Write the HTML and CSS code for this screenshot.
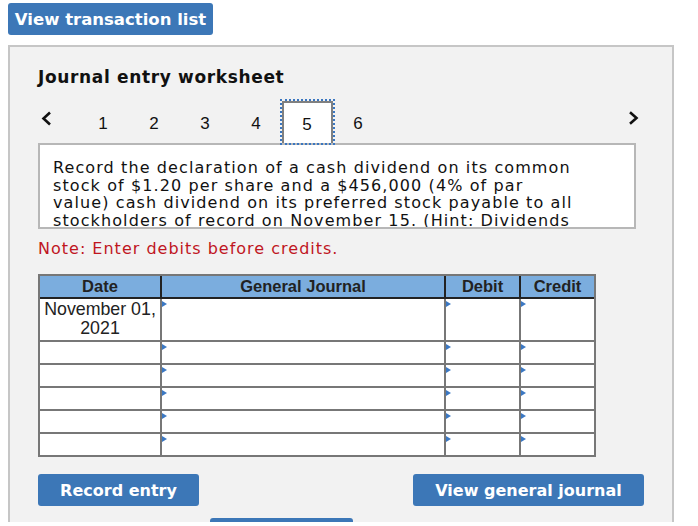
FILE: index.html
```html
<!DOCTYPE html>
<html lang="en">
<head>
<meta charset="utf-8">
<title>Journal entry worksheet</title>
<link rel="stylesheet" href="styles.css">
</head>
<body>
<div class="page">
  <button class="btn btn-top">View transaction list</button>
  <section class="panel">
    <h2 class="title">Journal entry worksheet</h2>
    <nav class="steps">
      <span class="chev chev-prev"><svg width="11" height="15" viewBox="0 0 11 15"><path d="M9 1.5 L2.5 7.5 L9 13.5" fill="none" stroke="#111" stroke-width="2.6"/></svg></span>
      <span class="step">1</span>
      <span class="step">2</span>
      <span class="step">3</span>
      <span class="step">4</span>
      <span class="step step-active">5</span>
      <span class="step">6</span>
      <span class="spacer"></span>
      <span class="chev chev-next"><svg width="11" height="14" viewBox="0 0 11 14"><path d="M2 1.2 L8.5 7 L2 12.8" fill="none" stroke="#111" stroke-width="2.6"/></svg></span>
    </nav>
    <div class="prompt">Record the declaration of a cash dividend on its common stock of $1.20 per share and a $456,000 (4% of par value) cash dividend on its preferred stock payable to all stockholders of record on November 15. (Hint: Dividends payable to stockholders of record.)</div>
    <p class="note">Note: Enter debits before credits.</p>
    <div class="journal">
      <div class="th">Date</div>
      <div class="th">General Journal</div>
      <div class="th">Debit</div>
      <div class="th th-last">Credit</div>

      <div class="td td-date tall">November 01,<br>2021</div>
      <div class="td mark tall"></div>
      <div class="td mark tall"></div>
      <div class="td mark tall td-last"></div>

      <div class="td"></div><div class="td mark"></div><div class="td mark"></div><div class="td mark td-last"></div>
      <div class="td"></div><div class="td mark"></div><div class="td mark"></div><div class="td mark td-last"></div>
      <div class="td"></div><div class="td mark"></div><div class="td mark"></div><div class="td mark td-last"></div>
      <div class="td"></div><div class="td mark"></div><div class="td mark"></div><div class="td mark td-last"></div>
      <div class="td row-last"></div><div class="td mark row-last"></div><div class="td mark row-last"></div><div class="td mark td-last row-last"></div>
    </div>
    <div class="actions">
      <button class="btn btn-action">Record entry</button>
      <button class="btn btn-action btn-wide">View general journal</button>
    </div>
    <div class="more"><span class="bar"></span></div>
  </section>
</div>
</body>
</html>
```
FILE: styles.css
```css
html, body {
  margin: 0;
  padding: 0;
  background: #fff;
}
.page {
  height: 522px;
  overflow: hidden;
  padding: 3px 0 0 8px;
  box-sizing: border-box;
}
.btn {
  display: block;
  border: none;
  margin: 0;
  background: #3c77b7;
  color: #fff;
  font-family: "DejaVu Sans", Verdana, sans-serif;
  font-weight: bold;
  border-radius: 3px;
  cursor: pointer;
  padding: 0;
}
.btn-top {
  width: 205px;
  height: 32px;
  font-size: 16.5px;
  text-align: center;
}
.panel {
  margin-top: 10px;
  width: 666px;
  box-sizing: border-box;
  border: 2px solid #c6c6c6;
  background: #f2f2f2;
  padding: 20px 28px 40px 28px;
  min-height: 520px;
}
.title {
  margin: 0;
  font-family: "DejaVu Sans", Verdana, sans-serif;
  font-weight: bold;
  font-size: 17px;
  letter-spacing: 0.65px;
  line-height: 20px;
  color: #111;
}
.steps {
  display: flex;
  align-items: stretch;
  margin-top: 14px;
  height: 42px;
  font-family: "Liberation Sans", Arial, sans-serif;
  font-size: 17px;
  color: #111;
}
.chev {
  display: flex;
  align-items: flex-start;
}
.chev-prev {
  width: 39.5px;
  padding: 10px 0 0 3px;
  box-sizing: border-box;
}
.chev-next {
  padding: 10px 5px 0 0;
}
.spacer { flex: 1; }
.step {
  width: 51px;
  box-sizing: border-box;
  text-align: center;
  line-height: 42px;
  padding-top: 2px;
}
.step-active {
  position: relative;
  z-index: 1;
  background: #fff;
  border: 2px solid #808080;
  border-bottom: none;
  outline: 2px dotted #3a76c0;
  line-height: 40px;
}
.prompt {
  width: 598px;
  height: 86px;
  box-sizing: border-box;
  border: 2px solid #b7b7b7;
  background: #fff;
  padding: 14px 55px 0 13px;
  overflow: hidden;
  font-family: "DejaVu Sans", Verdana, sans-serif;
  font-size: 16px;
  letter-spacing: 1.1px;
  line-height: 17.5px;
  color: #111;
}
.note {
  margin: 10px 0 0 0;
  font-family: "DejaVu Sans", Verdana, sans-serif;
  font-size: 16px;
  letter-spacing: 1px;
  line-height: 20px;
  color: #c0161f;
}
.journal {
  margin-top: 15px;
  display: grid;
  grid-template-columns: 122px 284px 75px 73px;
  width: 558px;
  box-sizing: border-box;
  border: 2px solid #777;
  background: #fff;
  font-family: "Liberation Sans", Arial, sans-serif;
  color: #222;
}
.th {
  height: 23px;
  box-sizing: border-box;
  background: #7badde;
  border-right: 2px solid #222;
  border-bottom: 2px solid #222;
  font-weight: bold;
  font-size: 16.5px;
  line-height: 21px;
  text-align: center;
}
.th-last { border-right: none; }
.td {
  position: relative;
  height: 23px;
  box-sizing: border-box;
  border-right: 2px solid #777;
  border-bottom: 2px solid #777;
}
.td.tall { height: 43px; }
.td-last { border-right: none; }
.row-last { border-bottom: none; height: 21px; }
.td-date {
  font-size: 17.8px;
  line-height: 19px;
  text-align: center;
  padding-top: 1px;
}
.mark::before {
  content: "";
  position: absolute;
  left: 0;
  top: 2px;
  border-left: 5px solid #3b78c3;
  border-top: 3px solid transparent;
  border-bottom: 3px solid transparent;
}
.actions {
  margin-top: 17px;
  display: flex;
  justify-content: space-between;
}
.btn-action {
  width: 161px;
  height: 32px;
  font-size: 16px;
}
.btn-wide { width: 231px; }
.more {
  margin-top: 12px;
  padding-left: 172px;
}
.bar {
  display: block;
  width: 143px;
  height: 32px;
  background: #3c77b7;
  border-radius: 3px;
}
```
